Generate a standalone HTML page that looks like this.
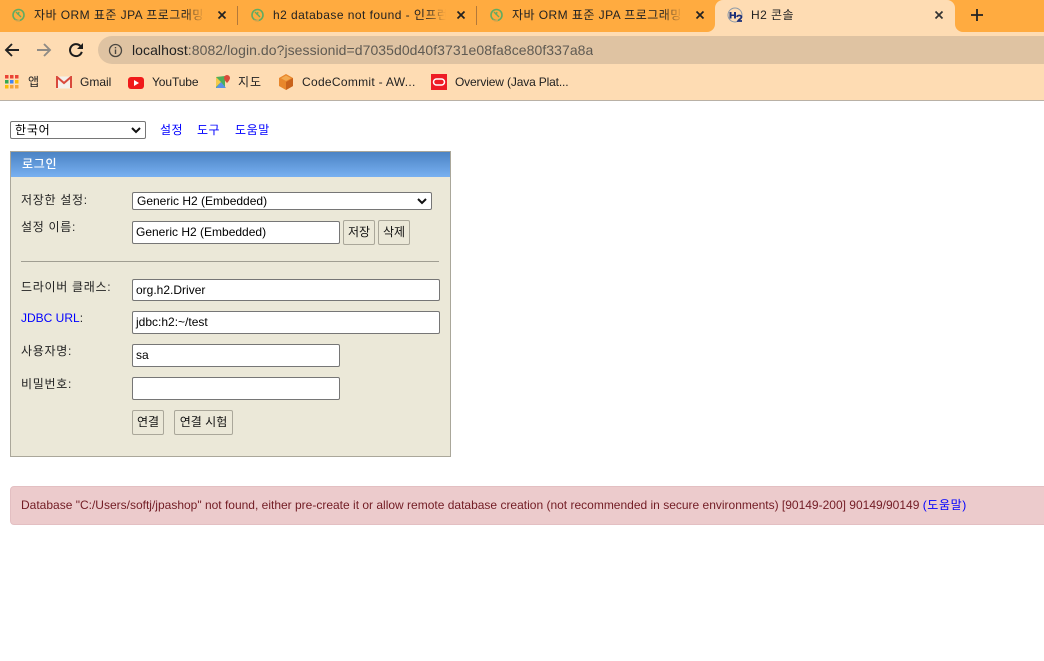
<!DOCTYPE html>
<html lang="ko">
<head>
<meta charset="utf-8">
<title>H2 콘솔</title>
<style>
html,body{margin:0;padding:0;background:#fff;width:1044px;height:661px;overflow:hidden}
body{position:relative;font-family:"Liberation Sans","Noto Sans CJK KR","NanumGothic",sans-serif;font-size:12px;color:#000}
.a{position:absolute;white-space:nowrap;overflow:hidden}
svg{position:absolute;display:block}
.tab{font-size:12px;color:#222;top:7px;height:16px;line-height:16px;letter-spacing:.45px}
.fade{-webkit-mask-image:linear-gradient(to right,#000 88%,transparent);mask-image:linear-gradient(to right,#000 88%,transparent)}
.bm{font-size:12px;color:#222;top:74px;height:16px;line-height:16px}
.lab{font-size:12px;color:#222;left:21px;height:16px;line-height:16px;letter-spacing:.7px}
.inp{position:absolute;background:#fff;border:1px solid #767676;border-radius:2px;box-sizing:border-box;font-size:12px;line-height:18px;padding-left:3px;color:#000;white-space:nowrap;overflow:hidden}
.btn{position:absolute;background:#ebe8d8;border:1px solid #aaa79a;border-radius:2px;box-sizing:border-box;font-size:12px;text-align:center;color:#111;white-space:nowrap;line-height:23px}
a{color:#00f;text-decoration:none}
</style>
</head>
<body>
<!-- chrome -->
<div class="a" style="left:0;top:0;width:1044px;height:32px;background:#ffab40"></div>
<div class="a" style="left:0;top:32px;width:1044px;height:68px;background:#fedcb3"></div>
<div class="a" style="left:0;top:100px;width:1044px;height:1px;background:#b9b1a6"></div>
<!-- active tab -->
<div class="a" style="left:715px;top:0;width:240px;height:32px;background:#fedcb3;border-radius:8px 8px 0 0"></div>
<svg style="left:707px;top:24px" width="8" height="8"><path d="M0 8A8 8 0 0 0 8 0V8Z" fill="#fedcb3"/></svg>
<svg style="left:955px;top:24px" width="8" height="8"><path d="M0 0A8 8 0 0 0 8 8H0Z" fill="#fedcb3"/></svg>
<!-- tab separators -->
<div class="a" style="left:237px;top:6px;width:1px;height:19px;background:#b3793a"></div>
<div class="a" style="left:476px;top:6px;width:1px;height:19px;background:#b3793a"></div>
<!-- favicons -->
<svg style="left:11px;top:7px" width="16" height="16" viewBox="0 0 16 16"><circle cx="7.5" cy="8" r="5.5" fill="none" stroke="#62ab61" stroke-width="1.6"/><path d="M5 5l5 5M8 5l-1 3" fill="none" stroke="#62ab61" stroke-width="1.4"/><path d="M4 13l2 1 3-1" fill="none" stroke="#d8a24d" stroke-width="1.2"/></svg>
<svg style="left:250px;top:7px" width="16" height="16" viewBox="0 0 16 16"><circle cx="7.5" cy="8" r="5.5" fill="none" stroke="#62ab61" stroke-width="1.6"/><path d="M5 5l5 5M8 5l-1 3" fill="none" stroke="#62ab61" stroke-width="1.4"/><path d="M4 13l2 1 3-1" fill="none" stroke="#d8a24d" stroke-width="1.2"/></svg>
<svg style="left:489px;top:7px" width="16" height="16" viewBox="0 0 16 16"><circle cx="7.5" cy="8" r="5.5" fill="none" stroke="#62ab61" stroke-width="1.6"/><path d="M5 5l5 5M8 5l-1 3" fill="none" stroke="#62ab61" stroke-width="1.4"/><path d="M4 13l2 1 3-1" fill="none" stroke="#d8a24d" stroke-width="1.2"/></svg>
<svg style="left:727px;top:7px" width="17" height="17" viewBox="0 0 17 17"><circle cx="8" cy="8" r="7" fill="none" stroke="#8d9aa8" stroke-width="1"/><path d="M2.500 5h2v6.500h-2zM7 5h2v6.500H7zM4 7.500h4v1.500H4z" fill="#1b2f78"/><path d="M10 10c.3-2.200 4.500-2 4.500 0 0 1.500-2.500 2-3.500 4h4" fill="none" stroke="#1b2f78" stroke-width="1.700"/></svg>
<!-- tab titles -->
<div class="a tab fade" style="left:34px;width:171px">자바 ORM 표준 JPA 프로그래밍</div>
<div class="a tab fade" style="left:273px;width:173px">h2 database not found - 인프런</div>
<div class="a tab fade" style="left:512px;width:171px">자바 ORM 표준 JPA 프로그래밍</div>
<div class="a tab" style="left:751px;width:60px">H2 콘솔</div>
<!-- tab close -->
<svg style="left:217px;top:10px" width="10" height="10"><path d="M1.500 1.500l7 7M8.500 1.500l-7 7" stroke="#222" stroke-width="1.700"/></svg>
<svg style="left:456px;top:10px" width="10" height="10"><path d="M1.500 1.500l7 7M8.500 1.500l-7 7" stroke="#222" stroke-width="1.700"/></svg>
<svg style="left:695px;top:10px" width="10" height="10"><path d="M1.500 1.500l7 7M8.500 1.500l-7 7" stroke="#222" stroke-width="1.700"/></svg>
<svg style="left:934px;top:10px" width="10" height="10"><path d="M1.500 1.500l7 7M8.500 1.500l-7 7" stroke="#333" stroke-width="1.700"/></svg>
<svg style="left:971px;top:9px" width="12" height="12"><path d="M6 0v12M0 6h12" stroke="#222" stroke-width="1.800"/></svg>
<!-- nav -->
<svg style="left:4px;top:42px" width="16" height="16" viewBox="0 0 16 16"><path d="M15 8H2M8 2L2 8l6 6" fill="none" stroke="#222" stroke-width="1.900"/></svg>
<svg style="left:36px;top:42px" width="16" height="16" viewBox="0 0 16 16"><path d="M1 8h13M8 2l6 6-6 6" fill="none" stroke="#8f8b85" stroke-width="1.900"/></svg>
<svg style="left:68px;top:42px" width="16" height="16" viewBox="0 0 16 16"><path d="M13.800 9.800A6 6 0 1 1 12.300 3.900" fill="none" stroke="#1c1c1c" stroke-width="2"/><path d="M15 1v6H9z" fill="#1c1c1c"/></svg>
<!-- omnibox -->
<div class="a" style="left:98px;top:36px;width:946px;height:28px;background:#dfc3a2;border-radius:14px 0 0 14px"></div>
<svg style="left:108px;top:43px" width="15" height="15" viewBox="0 0 15 15"><circle cx="7.500" cy="7.500" r="6" fill="none" stroke="#4a4640" stroke-width="1.300"/><path d="M6.800 6.500h1.400v4.500H6.800zM6.800 4h1.400v1.400H6.800z" fill="#4a4640"/></svg>
<div class="a" style="left:132px;top:42px;height:17px;line-height:17px;font-size:14px;color:#5f5a52;letter-spacing:.06px"><span style="color:#222">localhost</span>:8082/login.do?jsessionid=d7035d0d40f3731e08fa8ce80f337a8a</div>
<!-- bookmarks -->
<svg style="left:5px;top:75px" width="14" height="14"><g fill="#ea4335"><rect width="3.500" height="3.500"/><rect x="5" width="3.500" height="3.500"/><rect x="10" width="3.500" height="3.500"/></g><rect y="5" width="3.500" height="3.500" fill="#34a853"/><rect x="5" y="5" width="3.500" height="3.500" fill="#4285f4"/><rect x="10" y="5" width="3.500" height="3.500" fill="#fbbc05"/><rect y="10" width="3.500" height="3.500" fill="#fbbc05"/><rect x="5" y="10" width="3.500" height="3.500" fill="#f6a53a"/><rect x="10" y="10" width="3.500" height="3.500" fill="#f6a53a"/></svg>
<div class="a bm" style="left:28px">앱</div>
<svg style="left:56px;top:76px" width="16" height="13" viewBox="0 0 16 13"><rect x="0.500" y="0.500" width="15" height="12" fill="#f4f0ea"/><path d="M1 12V1l7 6 7-6v11" fill="none" stroke="#d9493c" stroke-width="2"/></svg>
<div class="a bm" style="left:80px">Gmail</div>
<svg style="left:128px;top:77px" width="16" height="12"><rect width="16" height="12" rx="3" fill="#f01a1a"/><path d="M6 3l5 3-5 3z" fill="#fff"/></svg>
<div class="a bm" style="left:152px;letter-spacing:-.1px">YouTube</div>
<svg style="left:215px;top:74px" width="16" height="16" viewBox="0 0 16 16"><path d="M1 3l9-1v12H1z" fill="#4fae5b"/><path d="M1 14l5-6 5 6z" fill="#5a92e8"/><path d="M1 3l5 5-5 5z" fill="#f2c94c"/><path d="M12 1a3 3 0 0 1 3 3c0 2-3 5-3 5s-3-3-3-5a3 3 0 0 1 3-3z" fill="#d94a3a"/></svg>
<div class="a bm" style="left:238px;letter-spacing:.9px">지도</div>
<svg style="left:278px;top:74px" width="16" height="16" viewBox="0 0 16 16"><path d="M8 0l7 4v8l-7 4-7-4V4z" fill="#e8862b"/><path d="M8 8l7-4v8l-7 4z" fill="#c9621b"/><path d="M8 1.500L13 4.200 8 7 3 4.200z" fill="#f3a94f"/></svg>
<div class="a bm" style="left:302px;letter-spacing:.3px">CodeCommit - AW...</div>
<svg style="left:431px;top:74px" width="16" height="16"><rect width="16" height="16" fill="#ee1c25"/><rect x="2.500" y="5" width="11" height="6" rx="3" fill="none" stroke="#fff" stroke-width="1.500"/></svg>
<div class="a bm" style="left:455px;letter-spacing:-.15px">Overview (Java Plat...</div>

<!-- top form bar -->
<div class="inp" style="left:10px;top:121px;width:136px;height:18px;line-height:16px;padding-left:4px;letter-spacing:.8px">한국어</div>
<svg style="left:131px;top:127px" width="10" height="7"><path d="M1 1l4 4 4-4" fill="none" stroke="#111" stroke-width="2"/></svg>
<a class="a" style="left:160px;top:122px;line-height:16px;letter-spacing:.5px" href="#">설정</a>
<a class="a" style="left:197px;top:122px;line-height:16px;letter-spacing:.5px" href="#">도구</a>
<a class="a" style="left:235px;top:122px;line-height:16px;letter-spacing:.6px" href="#">도움말</a>

<!-- login panel -->
<div class="a" style="left:10px;top:151px;width:441px;height:306px;box-sizing:border-box;background:#ebe8d8;border:1px solid #aaa79a"></div>
<div class="a" style="left:11px;top:152px;width:439px;height:25px;background:linear-gradient(#4b83c4,#78b0f1)"></div>
<div class="a" style="left:22px;top:156px;line-height:16px;font-size:12px;color:#fff;font-weight:500;letter-spacing:.7px">로그인</div>

<div class="a lab" style="top:192px">저장한 설정:</div>
<div class="inp" style="left:132px;top:192px;width:300px;height:18px;line-height:16px;padding-left:4px">Generic H2 (Embedded)</div>
<svg style="left:417px;top:198px" width="10" height="7"><path d="M1 1l4 4 4-4" fill="none" stroke="#111" stroke-width="2"/></svg>

<div class="a lab" style="top:219px">설정 이름:</div>
<div class="inp" style="left:132px;top:221px;width:208px;height:23px;line-height:21px">Generic H2 (Embedded)</div>
<div class="btn" style="left:343px;top:220px;width:32px;height:25px">저장</div>
<div class="btn" style="left:378px;top:220px;width:32px;height:25px">삭제</div>

<div class="a" style="left:21px;top:261px;width:418px;height:1px;background:#a09e92"></div>

<div class="a lab" style="top:279px">드라이버 클래스:</div>
<div class="inp" style="left:132px;top:279px;width:308px;height:22px;line-height:20px">org.h2.Driver</div>

<div class="a lab" style="top:310px;letter-spacing:0"><a href="#">JDBC URL</a>:</div>
<div class="inp" style="left:132px;top:311px;width:308px;height:23px;line-height:21px">jdbc:h2:~/test</div>

<div class="a lab" style="top:343px">사용자명:</div>
<div class="inp" style="left:132px;top:344px;width:208px;height:23px;line-height:21px">sa</div>

<div class="a lab" style="top:376px">비밀번호:</div>
<div class="inp" style="left:132px;top:377px;width:208px;height:23px"></div>

<div class="btn" style="left:132px;top:410px;width:32px;height:25px">연결</div>
<div class="btn" style="left:174px;top:410px;width:59px;height:25px">연결 시험</div>

<!-- error alert -->
<div class="a" style="left:10px;top:486px;width:1040px;height:39px;box-sizing:border-box;background:#eccbcc;border:1px solid #e3bfc2;border-radius:4px 0 0 4px"></div>
<div class="a" style="left:21px;top:497px;line-height:16px;font-size:12px;color:#721c24">Database "C:/Users/softj/jpashop" not found, either pre-create it or allow remote database creation (not recommended in secure environments) [90149-200] 90149/90149 <a href="#" style="letter-spacing:.6px">(도움말)</a></div>
</body>
</html>
